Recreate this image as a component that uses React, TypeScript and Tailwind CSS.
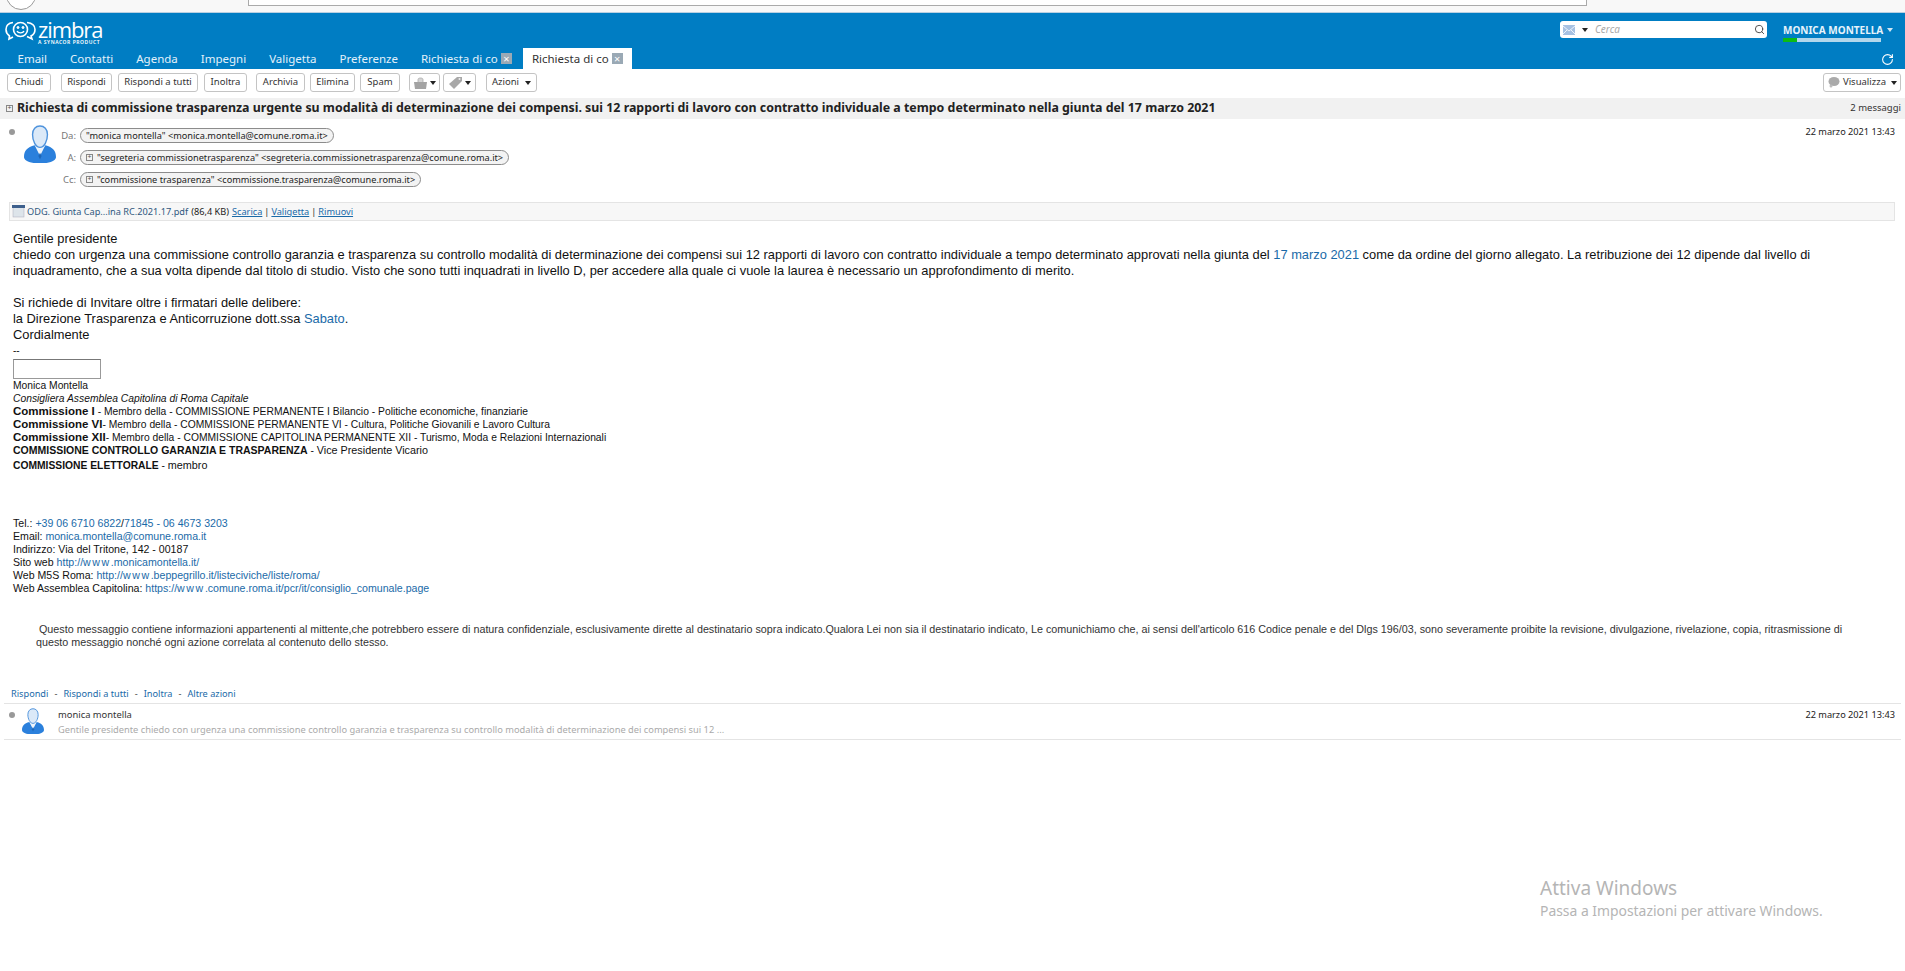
import { RotateCw, Search } from 'lucide-react';

const ui = 'font-["Noto_Sans",sans-serif]';
const mail = 'font-["Liberation_Sans",Arial,sans-serif]';

function Caret({ className = '' }: { className?: string }) {
  return <span className={`inline-block w-0 h-0 border-x-[3.5px] border-x-transparent border-t-[4px] border-t-[#222] ${className}`} />;
}

function PlusBox() {
  return (
    <span className="inline-flex items-center justify-center w-[7px] h-[7px] border border-[#888] text-[7px] leading-none text-[#555] shrink-0">
      <span className="relative -top-px">+</span>
    </span>
  );
}

function CloseBox() {
  return (
    <span className="inline-flex items-center justify-center w-[11px] h-[11px] bg-[#9aa9b5] text-white text-[11px] leading-none ml-[3px]">×</span>
  );
}

function Avatar({ size }: { size: number }) {
  return (
    <svg width={size} height={size * 1.2} viewBox="0 0 30 36" className="shrink-0">
      <path d="M0 30c0-6 3-9 10-11l5 5 5-5c7 2 10 5 10 11 0 3-4 6-15 6S0 33 0 30z" fill="#2b80dc" />
      <path d="M10 19l5 10 5-10-5 3z" fill="#eef4fb" />
      <path d="M15 26l-1.5 3 1.5 3 1.5-3z" fill="#1d66b8" />
      <path d="M15 1c4 0 7 3 7 8 0 6-3 12-7 12S8 15 8 9c0-5 3-8 7-8z" fill="#dbe9f8" stroke="#4f93dc" strokeWidth="1.3" />
    </svg>
  );
}

function Btn({ label, className = '' }: { label: string; className?: string }) {
  return (
    <div className={`h-[19px] flex items-center justify-center border border-[#c4c4c4] rounded-[3px] bg-white text-[9.5px] text-[#333] ${className}`}>
      {label}
    </div>
  );
}

function Pill({ text, plus }: { text: string; plus?: boolean }) {
  return (
    <span className="inline-flex items-center gap-[4px] h-[15px] px-[5px] border border-[#8c8c8c] rounded-[8px] bg-[#f3f3f3] text-[9.2px] leading-none text-[#222] whitespace-nowrap">
      {plus && <PlusBox />}
      {text}
    </span>
  );
}

function AddressRow({ label, children }: { label: string; children: React.ReactNode }) {
  return (
    <div className="flex items-center h-[15px]">
      <span className="w-[16px] text-right text-[9.5px] leading-none text-[#777] whitespace-nowrap">{label}</span>
      <div className="ml-[4px] flex">{children}</div>
    </div>
  );
}

const tabs = ['Email', 'Contatti', 'Agenda', 'Impegni', 'Valigetta', 'Preferenze'];

const a = 'text-[#1a6aa8]';
const www = 'tracking-[1.6px]';

export default function App() {
  return (
    <div className="relative w-[1905px] h-[971px] overflow-hidden bg-white">
      {/* browser chrome */}
      <div className="h-[13px] bg-[#f8f8f8] border-b border-[#b9d0e2] relative overflow-hidden">
        <div className="absolute left-[6px] -top-[20px] w-[30px] h-[30px] rounded-full border border-[#999] bg-white" />
        <div className="absolute left-[248px] right-[318px] -top-[10px] h-[16px] bg-white border border-[#aaa]" />
      </div>

      {/* header */}
      <div className={`h-[56px] bg-[#007dc3] flex flex-col ${ui}`}>
        <div className="h-[35px] flex items-start pl-[5px] pr-[24px]">
          <div className="flex items-start text-white mt-[7px]">
            <svg width="31" height="20" viewBox="0 0 31 20" fill="none" stroke="white" className="mt-[1px]">
              <path d="M8 1.5C3.5 2 1 4.5 1 8.5c0 3 1.5 5 3.5 6.5L4 18l4-2" strokeWidth="1.6" />
              <path d="M22 1.5c5 .5 8 3 8 7s-2 5.5-4 6.5l1 3-5-2.5" strokeWidth="1.6" />
              <circle cx="15.5" cy="8.5" r="7" strokeWidth="1.6" />
              <path d="M12 10c1 2.5 6 2.5 7 0" strokeWidth="1.3" />
              <circle cx="13" cy="6.5" r="1" fill="white" />
              <circle cx="18" cy="6.5" r="1" fill="white" />
            </svg>
            <div className="flex flex-col ml-[2px] leading-none">
              <span className="text-[22px] leading-[19px] tracking-[-1.1px] font-['Open_Sans',sans-serif]">zimbra</span>
              <span className="text-[5px] tracking-[.55px] font-semibold mt-[1px] whitespace-nowrap">A SYNACOR PRODUCT</span>
            </div>
          </div>
          <div className="ml-auto mt-[8px] w-[207px] h-[17px] bg-white rounded-[3px] flex items-center pl-[3px] pr-[2px]">
            <svg width="12" height="10" viewBox="0 0 12 10"><rect width="12" height="10" fill="#a7c1e2" /><path d="M0 1l6 5 6-5M0 9l4-4M12 9L8 5" stroke="#eef4fb" fill="none" /></svg>
            <Caret className="ml-[7px]" />
            <span className="ml-[7px] text-[10px] italic text-[#aaa]">Cerca</span>
            <Search size={11} className="ml-auto text-[#444]" />
          </div>
          <div className="ml-[16px] mt-[10px] w-[98px] relative">
            <div className="text-[10px] font-bold text-[#e6f3fb] leading-[14px] whitespace-nowrap">MONICA MONTELLA</div>
            <div className="h-[4px] w-[98px] bg-[#b3d7ec] mt-[1px]"><div className="h-full w-[14px] bg-[#0dbb14]" /></div>
            <Caret className="absolute -right-[12px] top-[5px] !border-t-[#cfe6f4]" />
          </div>
        </div>
        <div className="h-[21px] flex items-end text-[11.5px] relative">
          <div className="flex h-[21px] items-center pl-[6px] text-[#e3f1fa]">
            {tabs.map((t) => (
              <span key={t} className="px-[11.5px] whitespace-nowrap">{t}</span>
            ))}
            <span className="pl-[11.5px] flex items-center whitespace-nowrap">Richiesta di co<CloseBox /></span>
          </div>
          <div className="ml-[11px] h-[21px] w-[109px] bg-white text-[#333] flex items-center justify-center whitespace-nowrap">
            Richiesta di co<CloseBox />
          </div>
          <RotateCw size={13} className="ml-auto mr-[11px] mb-[3px] text-white" />
        </div>
      </div>

      {/* toolbar */}
      <div className={`h-[29px] flex items-center pl-[7px] pr-[4px] pb-[2px] ${ui}`}>
        <Btn label="Chiudi" className="w-[44px]" />
        <Btn label="Rispondi" className="ml-[10px] w-[51px]" />
        <Btn label="Rispondi a tutti" className="ml-[6px] w-[80px]" />
        <Btn label="Inoltra" className="ml-[6px] w-[43px]" />
        <Btn label="Archivia" className="ml-[9px] w-[49px]" />
        <Btn label="Elimina" className="ml-[5px] w-[45px]" />
        <Btn label="Spam" className="ml-[5px] w-[40px]" />
        <div className="ml-[9px] h-[19px] w-[31px] flex items-center justify-center gap-[3px] border border-[#c4c4c4] rounded-[3px]">
          <svg width="13" height="12" viewBox="0 0 13 12"><path d="M4 5V2.5C4 1.5 5 1 6.5 1S9 1.5 9 2.5V5" fill="#d5d5d5" stroke="#aaa" strokeWidth=".8" /><path d="M0 5h13l-1 7H1z" fill="#a3a3a3" /></svg>
          <Caret />
        </div>
        <div className="ml-[3px] h-[19px] w-[33px] flex items-center justify-center gap-[3px] border border-[#c4c4c4] rounded-[3px]">
          <svg width="13" height="12" viewBox="0 0 13 12"><path d="M8 0h5v4l-8 8-5-5z" fill="#a8a8a8" /><circle cx="10.5" cy="2" r="1" fill="#eee" /></svg>
          <Caret />
        </div>
        <div className="ml-[10px] w-[51px] h-[19px] flex items-center justify-center gap-[6px] border border-[#c4c4c4] rounded-[3px] text-[9.5px] text-[#333]">
          Azioni <Caret />
        </div>
        <div className="ml-auto w-[78px] h-[19px] flex items-center justify-center gap-[3px] border border-[#c4c4c4] rounded-[3px] text-[9.5px] text-[#333]">
          <svg width="13" height="13" viewBox="0 0 13 13"><ellipse cx="7" cy="5.5" rx="5.5" ry="4.5" fill="#aaa" /><circle cx="4" cy="10" r="1.5" fill="#bbb" /></svg>
          Visualizza
          <Caret className="ml-[2px]" />
        </div>
      </div>

      {/* subject */}
      <div className={`h-[21px] bg-[#f1f1f1] flex items-center pl-[6px] pr-[4px] ${ui}`}>
        <PlusBox />
        <span className="ml-[4px] text-[12.38px] font-bold text-[#222] whitespace-nowrap">
          Richiesta di commissione trasparenza urgente su modalità di determinazione dei compensi. sui 12 rapporti di lavoro con contratto individuale a tempo determinato nella giunta del 17 marzo 2021
        </span>
        <span className="ml-auto text-[9.5px] text-[#333]">2 messaggi</span>
      </div>

      {/* message header */}
      <div className={`flex pl-[9px] pr-[10px] pt-[6px] h-[83px] ${ui}`}>
        <span className="w-[6px] h-[6px] mt-[4px] rounded-full bg-[#999] shrink-0" />
        <div className="ml-[9px]"><Avatar size={32} /></div>
        <div className="ml-[4px] flex flex-col gap-[7px] pt-[3px]">
          <AddressRow label="Da:"><Pill text={'"monica montella" <monica.montella@comune.roma.it>'} /></AddressRow>
          <AddressRow label="A:"><Pill plus text={'"segreteria commissionetrasparenza" <segreteria.commissionetrasparenza@comune.roma.it>'} /></AddressRow>
          <AddressRow label="Cc:"><Pill plus text={'"commissione trasparenza" <commissione.trasparenza@comune.roma.it>'} /></AddressRow>
        </div>
        <span className="ml-auto text-[9.2px] leading-[14px] text-[#222] whitespace-nowrap">22 marzo 2021 13:43</span>
      </div>

      {/* attachment */}
      <div className={`mx-[9px] mr-[10px] h-[19px] bg-[#f7f7f7] border border-[#e4e4e4] flex items-center pl-[2px] text-[9.2px] text-[#222] ${ui}`}>
        <svg width="13" height="13" viewBox="0 0 13 13"><rect x="1" y="1" width="11" height="11" fill="#dde4ea" stroke="#aab" strokeWidth=".5" /><rect x="0" y="0" width="13" height="3" fill="#3d5f8c" /></svg>
        <span className="ml-[2px] text-[#31577f]">ODG. Giunta Cap...ina RC.2021.17.pdf</span>
        <span className="ml-[3px]">(86,4 KB)</span>
        <span className={`ml-[3px] underline ${a}`}>Scarica</span>
        <span className="mx-[2px]">|</span>
        <span className={`underline ${a}`}>Valigetta</span>
        <span className="mx-[2px]">|</span>
        <span className={`underline ${a}`}>Rimuovi</span>
      </div>

      {/* body */}
      <div className={`pl-[13px] pr-[55px] pt-[10px] text-[12.87px] leading-[16px] text-[#111] ${mail}`}>
        <div>Gentile presidente</div>
        <div>
          chiedo con urgenza una commissione controllo garanzia e trasparenza su controllo modalità di determinazione dei compensi sui 12 rapporti di lavoro con contratto individuale a tempo determinato approvati nella giunta del <span className={a}>17 marzo 2021</span> come da ordine del giorno allegato. La retribuzione dei 12 dipende dal livello di inquadramento, che a sua volta dipende dal titolo di studio. Visto che sono tutti inquadrati in livello D, per accedere alla quale ci vuole la laurea è necessario un approfondimento di merito.
        </div>
        <div className="h-[16px]" />
        <div>Si richiede di Invitare oltre i firmatari delle delibere:</div>
        <div>la Direzione Trasparenza e Anticorruzione dott.ssa <span className={a}>Sabato</span>.</div>
        <div>Cordialmente</div>
        <div className="text-[10px] leading-[16px]">--</div>
        <div className="w-[88px] h-[20px] border border-[#999] border-t-[#777]" />
        <div className="text-[10.3px] leading-[13px]">
          <div>Monica Montella</div>
          <div className="italic">Consigliera Assemblea Capitolina di Roma Capitale</div>
          <div><b className="text-[11.5px]">Commissione I</b> - Membro della - COMMISSIONE PERMANENTE I Bilancio - Politiche economiche, finanziarie</div>
          <div><b className="text-[11.5px]">Commissione VI</b>- Membro della - COMMISSIONE PERMANENTE VI - Cultura, Politiche Giovanili e Lavoro Cultura</div>
          <div><b className="text-[11.5px]">Commissione XII</b>- Membro della - COMMISSIONE CAPITOLINA PERMANENTE XII - Turismo, Moda e Relazioni Internazionali</div>
          <div><b className="text-[10.5px]">COMMISSIONE CONTROLLO GARANZIA E TRASPARENZA</b> - <span className="text-[10.8px]">Vice Presidente Vicario</span></div>
          <div className="mt-[2px]"><b>COMMISSIONE ELETTORALE</b> - <span className="text-[10.8px]">membro</span></div>
        </div>
        <div className="h-[45px]" />
        <div className="text-[10.6px] leading-[13px]">
          <div>Tel.: <span className={a}>+39 06 6710 6822</span>/<span className={a}>71845 - 06 4673 3203</span></div>
          <div>Email: <span className={a}>monica.montella@comune.roma.it</span></div>
          <div>Indirizzo: Via del Tritone, 142 - 00187</div>
          <div>Sito web <span className={a}>http://<span className={www}>www</span>.monicamontella.it/</span></div>
          <div>Web M5S Roma: <span className={a}>http://<span className={www}>www</span>.beppegrillo.it/listeciviche/liste/roma/</span></div>
          <div>Web Assemblea Capitolina: <span className={a}>https://<span className={www}>www</span>.comune.roma.it/pcr/it/consiglio_comunale.page</span></div>
        </div>
        <div className="h-[28px]" />
        <div className="text-[10.75px] leading-[13px] pl-[23px] text-[#333]">
          &nbsp;Questo messaggio contiene informazioni appartenenti al mittente,che potrebbero essere di natura confidenziale, esclusivamente dirette al destinatario sopra indicato.Qualora Lei non sia il destinatario indicato, Le comunichiamo che, ai sensi dell'articolo 616 Codice penale e del Dlgs 196/03, sono severamente proibite la revisione, divulgazione, rivelazione, copia, ritrasmissione di questo messaggio nonché ogni azione correlata al contenuto dello stesso.
        </div>
      </div>

      {/* footer links */}
      <div className={`pl-[11px] mt-[35px] h-[19px] flex items-center gap-[6px] text-[9.2px] text-[#1a6aa8] ${ui}`}>
        <span>Rispondi</span><span className="text-[#444]">-</span>
        <span>Rispondi a tutti</span><span className="text-[#444]">-</span>
        <span>Inoltra</span><span className="text-[#444]">-</span>
        <span>Altre azioni</span>
      </div>

      {/* collapsed message */}
      <div className={`mx-[4px] h-[37px] border-y border-[#e4e4e4] flex pl-[5px] pr-[6px] pt-[4px] ${ui}`}>
        <span className="w-[6px] h-[6px] mt-[4px] rounded-full bg-[#999] shrink-0" />
        <div className="ml-[7px]"><Avatar size={22} /></div>
        <div className="ml-[14px] flex flex-col">
          <span className="text-[9.4px] leading-[14px] text-[#333]">monica montella</span>
          <span className="text-[9.3px] leading-[16px] text-[#aaa] whitespace-nowrap">Gentile presidente chiedo con urgenza una commissione controllo garanzia e trasparenza su controllo modalità di determinazione dei compensi sui 12 ...</span>
        </div>
        <span className="ml-auto text-[9.2px] text-[#222] leading-[14px] whitespace-nowrap">22 marzo 2021 13:43</span>
      </div>

      {/* activation watermark */}
      <div className={`absolute left-[1540px] top-[876px] text-[#b5b5b5] ${ui}`}>
        <div className="text-[19px] leading-[24px]">Attiva Windows</div>
        <div className="text-[13.9px] leading-[20px] mt-[1px]">Passa a Impostazioni per attivare Windows.</div>
      </div>
    </div>
  );
}
